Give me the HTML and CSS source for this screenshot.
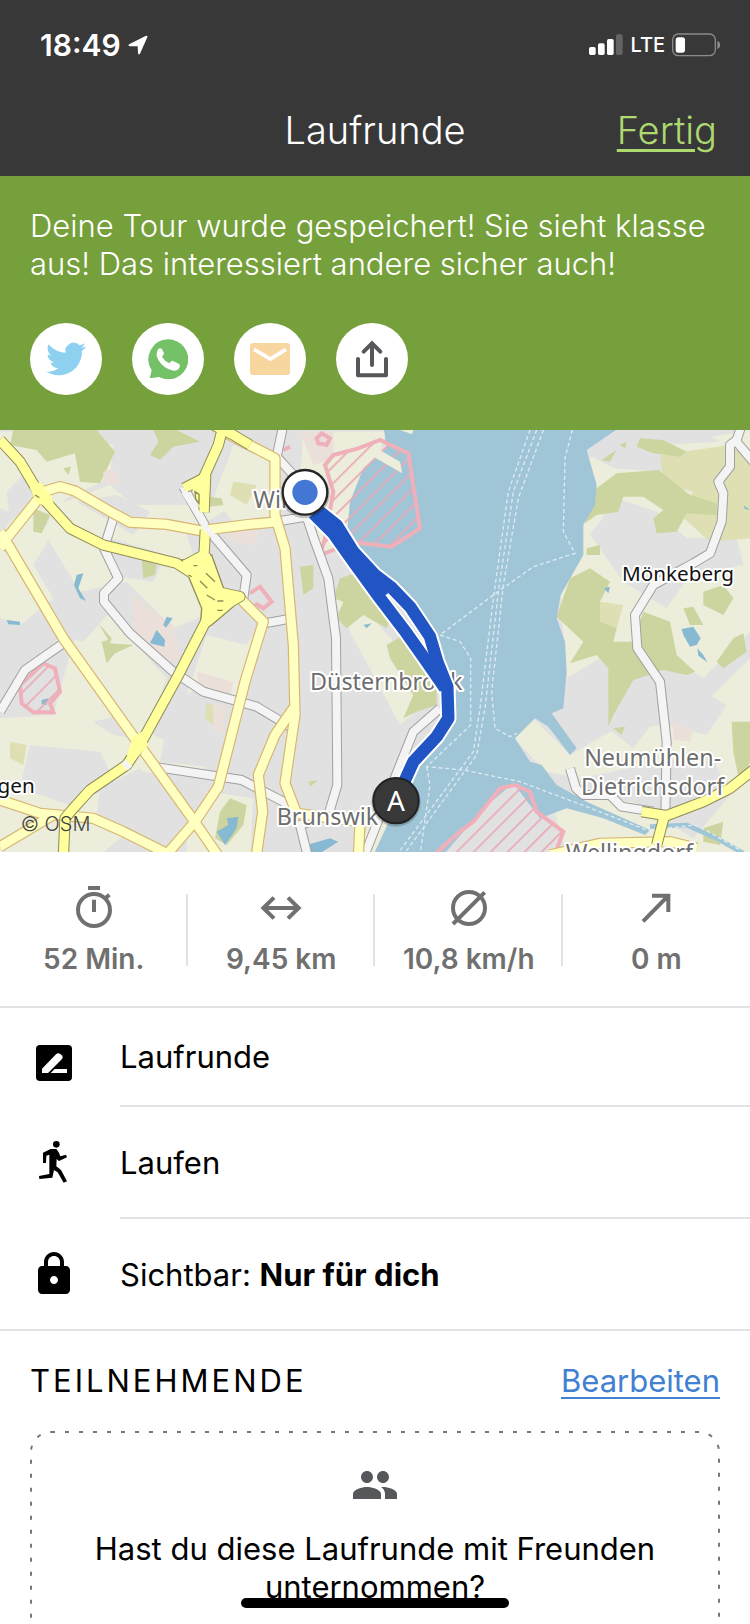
FILE: index.html
```html
<!DOCTYPE html>
<html lang="de">
<head>
    <meta charset="UTF-8">
    <meta name="viewport" content="width=device-width, initial-scale=1.0">
    <title>Laufrunde</title>
    <link rel="stylesheet" href="styles.css">
</head>
<body>

<div class="app">
    <header class="header">
        <div class="status-bar">
            <div class="status-time">
                <span>18:49</span>
                <svg width="20" height="20" viewBox="378 103 60 61"><path fill="#fff" d="M381 131L431 106Q439 103 436 111L414 160Q410 165 408 159L407 137L383 137Q376 135 381 131Z"/></svg>
            </div>
            <div class="status-icons">
                <svg width="34" height="22" viewBox="648 102 102 66">
                    <g fill="#fff">
                        <rect x="648" y="141" width="20" height="24" rx="5"/>
                        <rect x="675" y="130" width="20" height="35" rx="5"/>
                        <rect x="702" y="117" width="20" height="48" rx="5"/>
                    </g>
                    <rect x="729" y="103" width="20" height="62" rx="5" fill="#636363"/>
                </svg>
                <span>LTE</span>
                <svg width="48" height="24" viewBox="888 98 144 72">
                    <rect x="890" y="101" width="128" height="65" rx="17" fill="none" stroke="#8b8b8b" stroke-width="4"/>
                    <rect x="899" y="111" width="28" height="46" rx="8" fill="#fff"/>
                    <path d="M1024 122Q1033 126 1033 134T1024 146Z" fill="#8b8b8b"/>
                </svg>
            </div>
        </div>
        <nav class="nav">
            <h1>Laufrunde</h1>
            <a href="#">Fertig</a>
        </nav>
    </header>

    <main class="content">
        <section class="banner">
            <p>Deine Tour wurde gespeichert! Sie sieht klasse aus! Das interessiert andere sicher auch!</p>
            <div class="share-buttons">
                <button type="button" aria-label="Twitter">
                    <svg viewBox="0 0 24 24"><path fill="#8ed0f0" d="M23.953 4.57a10 10 0 01-2.825.775 4.958 4.958 0 002.163-2.723c-.951.555-2.005.959-3.127 1.184a4.92 4.92 0 00-8.384 4.482C7.69 8.095 4.067 6.13 1.64 3.162a4.822 4.822 0 00-.666 2.475c0 1.71.87 3.213 2.188 4.096a4.904 4.904 0 01-2.228-.616v.06a4.923 4.923 0 003.946 4.827 4.996 4.996 0 01-2.212.085 4.936 4.936 0 004.604 3.417 9.867 9.867 0 01-6.102 2.105c-.39 0-.779-.023-1.17-.067a13.995 13.995 0 007.557 2.209c9.053 0 13.998-7.496 13.998-13.985 0-.21 0-.42-.015-.63A9.935 9.935 0 0024 4.59z"/></svg>
                </button>
                <button type="button" aria-label="WhatsApp">
                    <svg viewBox="0 0 120 120">
                        <path fill="#75c168" d="M60 1A59 60 0 1 1 34 114L5 118L11 94A59 60 0 0 1 60 1Z"/>
                        <path fill="#fff" d="M30 31Q36 25 41 29L48 43Q48 47 42 53Q50 67 64 73L70 67Q73 64 77 67L93 75Q98 78 94 86Q89 95 78 95Q55 93 38 73Q22 54 27 39Z"/>
                    </svg>
                </button>
                <button type="button" aria-label="E-Mail">
                    <svg viewBox="0 0 120 120">
                        <rect y="12" width="120" height="96" rx="10" fill="#f7d6a0"/>
                        <path d="M12 31L61 60L108 31" fill="none" stroke="#fff" stroke-width="11"/>
                    </svg>
                </button>
                <button type="button" aria-label="Teilen">
                    <svg viewBox="0 0 120 120"><path d="M18 60V107Q18 109 20 109H100Q102 109 102 107V60M60 78V14M35 38L60 13L85 38" fill="none" stroke="#55575a" stroke-width="12" stroke-linecap="round"/></svg>
                </button>
            </div>
        </section>

        <section class="map" aria-label="Karte">
            <svg viewBox="0 15 2250 1266" preserveAspectRatio="xMidYMid slice">
                <defs>
                    <pattern id="hatch" width="36" height="36" patternUnits="userSpaceOnUse" patternTransform="rotate(45)">
                        <rect width="5" height="36" fill="#eaa9b5"/>
                    </pattern>
                    <g id="minor">
                        <path d="M850 0L830 95L880 150L960 240"/>
                        <path d="M840 288L920 275L945 350L985 460L1008 640L1012 1080L985 1170L900 1200L925 1300"/>
                        <path d="M550 185L620 310L740 450L730 520"/>
                        <path d="M790 596L875 580"/>
                        <path d="M340 280L312 370L355 460L312 505V530L390 625L520 740L610 800L770 845L870 905"/>
                        <path d="M190 655L75 735L0 860"/>
                        <path d="M475 1027L725 1065L850 1130L885 1170"/>
                        <path d="M1320 850L1240 920L1180 1070L1090 1300"/>
                        <path d="M2225 0L2210 45L2190 60V125L2155 170L2170 205L2165 290L2130 385L2080 415L1960 480L1905 570L1912 670L1980 770L2000 950L1996 1170"/>
                        <path d="M2205 45L2260 110"/>
                        <path d="M1710 1030L1728 1090L1750 1110H1830L1865 1145L1960 1160"/>
                    </g>
                    <g id="medium">
                        <path d="M120 215L20 340L0 370"/>
                        <path d="M0 320L25 360L190 640L415 955L580 1185L660 1300"/>
                        <path d="M130 200L180 185L225 198L340 265L390 292L500 298L600 317L750 298L835 290"/>
                        <path d="M680 25L825 100V270L855 370L880 660L885 870L855 1075L890 1165L1080 1190L1075 1300"/>
                        <path d="M715 515L790 590L735 770L655 1085L585 1190L490 1300"/>
                        <path d="M880 850L825 930L775 1050L788 1160L768 1300"/>
                        <path d="M0 1125L120 1165L280 1180L370 1220L500 1285"/>
                        <path d="M0 1265L160 1170"/>
                        <path d="M1650 1290L1800 1255L2010 1250L2090 1270"/>
                    </g>
                    <g id="major">
                        <path d="M0 45L60 110L120 210L210 310L310 360L530 415L600 460L640 545L530 760L420 960L380 1020L270 1095L220 1150L195 1180L190 1300"/>
                        <path d="M670 0L655 60L610 160L552 190"/>
                        <path d="M640 0L700 30L750 60"/>
                        <path d="M617 150L612 262"/>
                        <path d="M616 315L612 390L555 420"/>
                        <path d="M616 390L650 500L720 515L640 560"/>
                        <path d="M1925 1160L2000 1172L2110 1130L2190 1090L2260 1035"/>
                        <path d="M1995 1165L1970 1260"/>
                    </g>
                </defs>

                <!-- Land -->
                <rect width="2250" height="1300" fill="#e1e1e1"/>
                <g fill="#ecedda">
                    <path d="M0 20L200 20L340 60L330 160L200 220L130 300L0 250Z"/>
                    <path d="M0 330L60 250L160 320L100 420L160 520L60 600L0 580Z"/>
                    <path d="M170 240L330 180L400 240L530 240L700 240L560 330L640 560L520 610L380 470L240 500L130 320Z"/>
                    <path d="M700 60L820 110L810 280L700 290L640 220Z"/>
                    <path d="M0 880L160 870L220 650L300 540L500 760L440 920L640 1010L300 1290H0Z"/>
                    <path d="M620 630L740 660L780 600L720 860L620 770L560 810Z"/>
                    <path d="M910 20L1160 20L1050 350L960 390L900 160Z"/>
                    <path d="M1000 520L1080 540L1320 800L1200 900L1060 640Z"/>
                    <path d="M1760 100L2250 15V620L2110 760L2010 700L1930 820L1700 780L1680 480Z"/>
                    <path d="M1540 940L1600 880L1710 990L1830 920L2060 890L2250 700V1281H1700L1620 1020Z"/>
                    <path d="M560 1090L760 1120L750 1290H560ZM1100 1210L1160 1160V1290H1080Z"/>
                </g>
                <g fill="#e1e1e1">
                    <path d="M20 200L90 130L110 220L30 290ZM230 230L350 210L450 260L400 330L300 270Z"/>
                    <path d="M330 340L500 390L460 470L330 450ZM130 620L220 500L330 560L250 650Z"/>
                    <path d="M90 960L300 980L350 1080L210 1140L60 1090ZM500 900L680 850L650 1030L480 1010Z"/>
                    <path d="M280 890L360 870L400 940L340 930ZM430 1040L640 1060L590 1160L480 1120Z"/>
                    <path d="M300 1090L420 1030L540 1180L460 1240L290 1170Z"/>
                    <path d="M1770 330L1850 220L1970 260L2060 340L2210 340L2230 420L2070 450L2000 550L1870 470Z"/>
                    <path d="M1770 90L1880 50L2110 20L2160 50L1980 60L1990 140L1840 130Z"/>
                    <path d="M1700 760L1800 700L1980 750L2080 780L2180 840L2120 930L1960 890L1900 970L1760 860L1690 850Z"/>
                    <path d="M1640 1040L1740 1060L2130 980L2190 1110L2080 1240L1900 1130L1700 1120Z"/>
                </g>
                <g fill="#dfdfb4">
                    <path d="M1980 90L2190 60L2250 100V340L2130 350L2030 260L2080 200L1990 180ZM1800 530L1870 540L1850 610L1790 600Z"/>
                    <path d="M700 170L770 180L740 240L690 210ZM620 830L650 850L640 900L615 880ZM30 950L80 960L70 1020L30 1000Z"/>
                </g>
                <g fill="#ccd59f">
                    <path d="M40 15H290L345 80L300 175L240 170L225 85L140 110L110 75L30 60Z"/>
                    <path d="M460 15H530L600 50L520 65L480 105L450 90L475 50Z"/>
                    <path d="M100 250L150 270L125 325L100 320ZM190 130L213 125L205 150ZM625 215L665 220L670 240L630 245Z"/>
                    <path d="M295 595L335 640L330 655L400 660L345 685L320 715L305 650L325 645ZM425 400L470 420L465 450L430 460Z"/>
                    <path d="M1020 460L1080 440L1180 560L1160 610L1090 570L1040 610L1010 580L1030 530L1000 520ZM900 425L940 420L940 490L910 510Z"/>
                    <path d="M1160 660L1210 630L1310 790V840L1250 860L1210 880L1240 810L1170 700Z"/>
                    <path d="M1920 40L1990 45L2060 80L2040 95L1960 85L1910 65ZM1805 105L1850 75L1830 110ZM1860 60L1880 50L1875 70Z"/>
                    <path d="M1755 295L1790 190L1850 145L1975 135L2070 210L2150 235V270L2060 265L2030 320L1970 325L1960 280L1990 255L1930 215L1870 215L1855 260L1790 270Z"/>
                    <path d="M1670 575L1710 460L1770 430L1830 470L1800 530L1800 590L1850 610L1840 650L1900 650L1930 560L2010 590L2030 690L2085 740L2060 750L1990 735L1900 765L1840 870L1825 905V730L1790 690L1710 715L1750 650Z"/>
                    <path d="M1760 370L1800 360L1800 390L1760 390ZM2110 500L2170 480L2200 520L2170 570L2110 540ZM2050 550L2080 545L2110 600L2070 600Z"/>
                    <path d="M2200 640L2230 625L2240 680L2170 730L2150 710ZM2195 890H2250V1010L2220 1080L2200 980ZM1840 910L1875 905L1865 930Z"/>
                    <path d="M2110 1210L2170 1190L2160 1260L2110 1250ZM690 1120L740 1140L730 1200L680 1260L645 1240L660 1160ZM925 1070L955 1065L930 1085Z"/>
                </g>
                <g fill="#eadfd9">
                    <path d="M400 510L520 600L540 700L500 710L400 610ZM590 740L700 770L690 820L600 800ZM310 140L345 130L360 175L310 180ZM640 830L680 850L670 920L640 920ZM680 290L780 320L760 360L690 350ZM900 20H1000L1000 100L940 120Z"/>
                    <path d="M2020 890L2080 915L2070 950L2020 945Z"/>
                </g>

                <!-- Wasser -->
                <g fill="#a0c5d7">
                    <path d="M1150 0H1870L1760 75L1790 180L1785 240L1750 300V390L1682 510L1670 580L1695 650L1700 740L1690 850L1655 865L1730 970L1710 990L1645 905L1605 880L1545 940L1590 1010L1625 1020L1670 1080L1760 1130L1950 1215L1935 1230L1810 1180L1700 1150L1620 1180L1540 1075L1450 1150L1330 1290H1120L1190 1140L1330 900L1350 780L1290 640L1220 540L1120 440L1040 330L1050 230L1090 130L1160 70Z"/>
                    <path d="M1240 15L1236 28L1200 15Z" fill="#ecedda"/>
                </g>
                <g fill="#87bad2">
                    <path d="M20 585L60 590V600L25 598ZM230 450L250 445L235 490L258 528L240 520L222 480ZM500 575L518 580L498 608L490 600ZM470 615L495 645L493 665L450 655Z"/>
                    <path d="M680 1180L715 1175L710 1210L675 1260L650 1220L685 1200ZM920 1260L990 1240L1015 1250L960 1285H915Z"/>
                    <path d="M2045 612L2080 605L2102 640L2090 660L2070 665L2050 630ZM2092 670L2110 690L2122 712L2095 692ZM1812 490L1830 485L1825 505ZM125 825L145 820L140 840L125 838ZM1090 600L1115 595L1100 610ZM2230 240L2250 255L2235 252Z"/>
                </g>
                <path d="M1950 1205L2060 1200L2150 1240L2230 1285" fill="none" stroke="#a0c5d7" stroke-width="14"/>

                <!-- Fährlinien -->
                <g class="ferry">
                    <path d="M1590 15L1525 200L1480 520L1440 850L1420 980L1190 1290"/>
                    <path d="M1610 15L1540 200L1495 500L1455 850L1430 990L1210 1290"/>
                    <path d="M1630 15L1555 220L1510 480L1475 800L1485 910L1530 935L1550 925"/>
                    <path d="M1717 15L1695 100L1690 320L1725 385L1600 425L1480 510L1320 630L1380 650L1412 700V900L1280 1025L1390 1035L1560 1070L1760 1145L1940 1215L2090 1200L2220 1275"/>
                    <path d="M1280 1025L1290 1080L1260 1290"/>
                </g>

                <!-- Sperrgebiete -->
                <g class="restricted">
                    <path d="M1000 90L1075 70L1140 45L1225 85L1260 310L1175 365L1060 352L960 390L975 340L1000 200L975 120Z"/>
                    <path d="M60 780L130 715L165 730L180 800L150 835L160 862H100L65 835Z"/>
                    <path d="M1290 1300L1380 1220L1420 1190L1500 1090L1545 1080L1590 1100L1610 1160L1690 1220L1660 1300Z"/>
                </g>
                <g class="restricted-outline">
                    <path d="M750 505L780 485L815 530L790 550L765 535"/>
                    <path d="M950 40L965 25L990 40L980 60L955 55ZM850 75L870 65"/>
                </g>
                <path d="M1130 70L1200 110L1207 145L1120 95Z" fill="#ecedda"/>

                <!-- Straßen -->
                <use href="#minor" class="road" stroke="#a0a0a0" stroke-width="30"/>
                <use href="#minor" class="road" stroke="#f4f4f4" stroke-width="24"/>
                <use href="#medium" class="road" stroke="#d5b673" stroke-width="34"/>
                <use href="#medium" class="road" stroke="#ffffc0" stroke-width="27"/>
                <use href="#major" class="road" stroke="#8f8c58" stroke-width="34"/>
                <path d="M545 405L600 400L635 390L680 515L720 510L700 545L635 600L600 620L605 550Z" fill="#ffff9c" stroke="#8f8c58" stroke-width="4"/>
                <path d="M90 190L120 170L155 215L165 250L110 235Z" fill="#ffff9c"/>
                <path d="M400 935L425 920L445 960L400 1010L380 990Z" fill="#ffff9c"/>
                <path d="M575 180L620 150L625 260H605L585 220Z" fill="#ffff9c"/>
                <use href="#major" class="road" stroke="#ffff9c" stroke-width="28"/>
                <path d="M552 200L620 310L650 345M370 1010L390 1030" class="road" stroke="#f4f4f4" stroke-width="18"/>
                <path d="M585 200L597 208V235L587 222ZM565 450L575 455M580 422H592M618 445L645 470M600 468L622 490M620 510L645 525M652 528H670M652 556H668M105 210L118 218" fill="none" stroke="#8f8c58" stroke-width="4"/>

                <!-- Orte -->
                <g class="place">
                    <text x="760" y="248">Wik</text>
                    <text x="930" y="796">Düsternbrook</text>
                    <text x="830" y="1200">Brunswik</text>
                    <text x="1958" y="1024" text-anchor="middle">Neumühlen-</text>
                    <text x="1958" y="1110" text-anchor="middle">Dietrichsdorf</text>
                    <text x="1888" y="1308" text-anchor="middle">Wellingdorf</text>
                </g>
                <g class="place town">
                    <text x="1866" y="468">Mönkeberg</text>
                    <text x="104" y="1104" text-anchor="end">Kronshagen</text>
                </g>
                <text x="62" y="1218" class="copyright">© OSM</text>

                <!-- Aufgezeichnete Strecke -->
                <g class="route">
                    <path class="route-halo" d="M940 245L1010 300L1060 380L1125 450L1175 488L1230 545L1290 635L1312 710L1342 785L1345 880L1310 935L1240 1010L1195 1110"/>
                    <path class="route-halo" d="M940 265L1000 325L1060 410L1140 520L1220 625L1280 710L1335 790"/>
                    <path class="route-line" d="M940 245L1010 300L1060 380L1125 450L1175 488L1230 545L1290 635L1312 710L1342 785L1345 880L1310 935L1240 1010L1195 1110"/>
                    <path class="route-line" d="M940 265L1000 325L1060 410L1140 520L1220 625L1280 710L1335 790"/>
                    <path class="route-fill" d="M960 270L1010 300L1060 380L1125 450L1165 505L1140 520L1060 410L1000 325Z"/>
                </g>

                <!-- Start und Ziel -->
                <circle cx="915" cy="206" r="74" fill="#000" opacity=".2"/>
                <circle cx="915" cy="202" r="67" fill="#fff" stroke="#262626" stroke-width="7"/>
                <circle cx="915" cy="202" r="38" fill="#4477d4"/>
                <circle cx="1188" cy="1131" r="74" fill="#000" opacity=".2"/>
                <circle cx="1188" cy="1127" r="68" fill="#383838" stroke="#222" stroke-width="6"/>
                <text x="1188" y="1157" class="marker-label">A</text>
            </svg>
        </section>

        <ul class="stats">
            <li>
                <svg viewBox="210 72 144 144"><path d="M318 113L328 104M282 119V156M264 84H300" class="line"/><circle cx="282" cy="150" r="48" class="line"/></svg>
                <span>52 Min.</span>
            </li>
            <li>
                <svg viewBox="771 72 144 144"><path d="M790 144H896M822 113L790 144L822 175M864 113L896 144L864 175" class="line"/></svg>
                <span>9,45 km</span>
            </li>
            <li>
                <svg viewBox="225 72 144 144"><circle cx="297" cy="144" r="48" class="line"/><path d="M249 192L344 97" class="line"/></svg>
                <span>10,8 km/h</span>
            </li>
            <li>
                <svg viewBox="786 72 144 144"><path d="M819 184L894 108M846 107H895V156" class="line"/></svg>
                <span>0 m</span>
            </li>
        </ul>

        <ul class="details">
            <li>
                <svg viewBox="90 114 144 144"><rect x="108" y="132" width="108" height="108" rx="12"/><path fill="#fff" d="M126 203L168 160Q174 154 180 158L187 164Q190 169 186 174L144 216H126ZM164 204H201V216H152Z"/></svg>
                <span>Laufrunde</span>
            </li>
            <li>
                <svg viewBox="90 417 144 144"><circle cx="169" cy="436" r="10"/><path d="M129 461L152 450H169L176 460L181 472L198 467L201 475L177 486L170 480L169 502L183 513L201 547L191 551L173 520L162 513L157 536L118 540L117 531L148 525V467L139 470L138 492H129Z"/></svg>
                <span>Laufen</span>
            </li>
            <li>
                <svg viewBox="0 0 24 24"><path d="M18 8h-1V6c0-2.760-2.240-5-5-5S7 3.240 7 6v2H6c-1.100 0-2 .9-2 2v10c0 1.100.9 2 2 2h12c1.100 0 2-.9 2-2V10c0-1.100-.9-2-2-2zm-6 9c-1.100 0-2-.9-2-2s.9-2 2-2 2 .9 2 2-.9 2-2 2zm3-9H9V6c0-1.700 1.300-3 3-3s3 1.300 3 3v2z"/></svg>
                <span>Sichtbar: <strong>Nur für dich</strong></span>
            </li>
        </ul>

        <section class="participants">
            <div class="participants-head">
                <h2>TEILNEHMENDE</h2>
                <a href="#">Bearbeiten</a>
            </div>
            <div class="invite">
                <svg class="invite-border"><rect x="1" y="1" rx="20"/></svg>
                <svg class="invite-icon" viewBox="0 0 24 24"><path d="M16 11c1.660 0 2.990-1.340 2.990-3S17.660 5 16 5s-3 1.340-3 3 1.340 3 3 3zm-8 0c1.660 0 2.990-1.340 2.990-3S9.660 5 8 5 5 6.340 5 8s1.340 3 3 3zm0 2c-2.330 0-7 1.170-7 3.500V19h14v-2.500c0-2.330-4.670-3.500-7-3.500zm8 0c-.29 0-.62.02-.97.05 1.160.84 1.970 1.970 1.970 3.450V19h6v-2.500c0-2.330-4.670-3.500-7-3.500z"/></svg>
                <p>Hast du diese Laufrunde mit Freunden unternommen?</p>
            </div>
        </section>
    </main>

    <div class="home-indicator"></div>
</div>

</body>
</html>
```
FILE: styles.css
```css
* {
    box-sizing: border-box;
}
body {
    margin: 0;
    font-family: Inter, "Liberation Sans", sans-serif;
    font-size: 31px;
    line-height: 38px;
    color: #000;
    background-color: #fff;
}
h1, h2, p, ul {
    margin: 0;
    padding: 0;
    font-weight: normal;
}
ul {
    list-style: none;
}
svg {
    display: block;
}
.app {
    display: flex;
    flex-direction: column;
    height: 100vh;
    overflow: hidden;
}

/* Kopfzeile */
.header {
    flex: none;
    background-color: #383838;
    color: #fff;
}
.status-bar {
    display: flex;
    justify-content: space-between;
    align-items: center;
    height: 88px;
    padding: 2px 30px 0 40px;
}
.status-time, .status-icons {
    display: flex;
    align-items: center;
    gap: 7px;
}
.status-time {
    font-size: 30px;
    font-weight: 600;
}
.status-icons {
    font-size: 20px;
    font-weight: 500;
}
.nav {
    display: grid;
    grid-template-columns: 1fr auto 1fr;
    align-items: center;
    height: 88px;
    padding: 0 33px 4px;
    font-size: 38px;
    font-weight: 300;
    line-height: 48px;
}
.nav h1 {
    grid-column: 2;
    font-size: 38px;
    font-weight: 300;
}
.nav a {
    justify-self: end;
    color: #add970;
    text-decoration-thickness: 3px;
    text-underline-offset: 5px;
}

/* Inhalt */
.content {
    flex: 1;
    min-height: 0;
    overflow-y: auto;
    scrollbar-width: none;
}
.banner {
    padding: 31px 30px 35px;
    background-color: #76a03c;
    color: #fff;
}
.banner p {
    font-weight: 300;
}
.share-buttons {
    display: flex;
    gap: 30px;
    margin-top: 40px;
}
.share-buttons button {
    display: flex;
    align-items: center;
    justify-content: center;
    width: 72px;
    height: 72px;
    padding: 0;
    border: none;
    border-radius: 50%;
    background-color: #fff;
    cursor: pointer;
}
.share-buttons svg {
    width: 40px;
    height: 40px;
}

/* Karte */
.map svg {
    width: 100%;
    height: 422px;
}
.road {
    fill: none;
    stroke-linejoin: round;
}
.ferry {
    fill: none;
    stroke: #dcebf2;
    stroke-width: 4;
    stroke-dasharray: 12 8;
}
.restricted {
    fill: url(#hatch);
    stroke: #efb0ba;
    stroke-width: 12;
}
.restricted-outline {
    fill: none;
    stroke: #efb0ba;
    stroke-width: 12;
}
.place {
    font-family: "Noto Sans", sans-serif;
    font-size: 70px;
    fill: #6e6e6e;
    stroke: #fff;
    stroke-width: 12;
    stroke-linejoin: round;
    paint-order: stroke;
}
.town {
    font-size: 62px;
    fill: #111;
}
.copyright {
    font-size: 60px;
    font-weight: 300;
    fill: #444;
}
.route path {
    fill: none;
    stroke-linejoin: round;
}
.route .route-halo {
    stroke: #fff;
    stroke-width: 49;
}
.route .route-line {
    stroke: #2155c4;
    stroke-width: 37;
}
.route .route-fill {
    fill: #2155c4;
}
.marker-label {
    font-family: "Noto Sans", sans-serif;
    font-size: 84px;
    fill: #fff;
    text-anchor: middle;
}

/* Kennzahlen */
.stats {
    display: flex;
    padding: 32px 0 30px;
    border-bottom: 2px solid #e2e2e2;
}
.stats li {
    flex: 1;
    display: flex;
    flex-direction: column;
    align-items: center;
    gap: 11px;
    color: #707070;
    font-size: 28px;
    font-weight: 600;
    line-height: 33px;
}
.stats li:not(:last-child) {
    background: linear-gradient(#e2e2e2, #e2e2e2) no-repeat right 10px / 2px 72px;
}
.stats svg {
    width: 48px;
    height: 48px;
}
.line {
    fill: none;
    stroke: #707070;
    stroke-width: 12;
}

/* Details */
.details {
    border-bottom: 2px solid #e2e2e2;
}
.details li {
    display: flex;
    padding-left: 30px;
}
.details svg {
    flex: none;
    width: 48px;
    height: 48px;
    margin: 31px 42px 0 0;
}
.details span {
    flex: 1;
    padding: 37px 0 35px;
}
.details li:first-child span {
    padding: 30px 0 29px;
}
.details li:not(:last-child) span {
    border-bottom: 2px solid #e2e2e2;
}

/* Teilnehmende */
.participants {
    padding: 31px 30px 40px;
}
.participants-head {
    display: flex;
    justify-content: space-between;
    margin-bottom: 31px;
}
.participants-head h2 {
    font-size: 31px;
    letter-spacing: 3px;
}
.participants-head a {
    color: #4280d2;
    text-decoration-thickness: 2px;
    text-underline-offset: 5px;
}
.invite {
    position: relative;
    padding: 30px 60px 60px;
    text-align: center;
}
.invite-border {
    position: absolute;
    inset: 0;
    width: 100%;
    height: 100%;
}
.invite-border rect {
    width: calc(100% - 2px);
    height: calc(100% - 2px);
    fill: none;
    stroke: #777;
    stroke-width: 2;
    stroke-dasharray: 4 10;
}
.invite-icon {
    width: 48px;
    height: 48px;
    margin: 0 auto 21px;
    fill: #55575a;
}
.home-indicator {
    position: fixed;
    bottom: 16px;
    left: 50%;
    width: 268px;
    height: 10px;
    margin-left: -134px;
    border-radius: 5px;
    background-color: #000;
}
```
